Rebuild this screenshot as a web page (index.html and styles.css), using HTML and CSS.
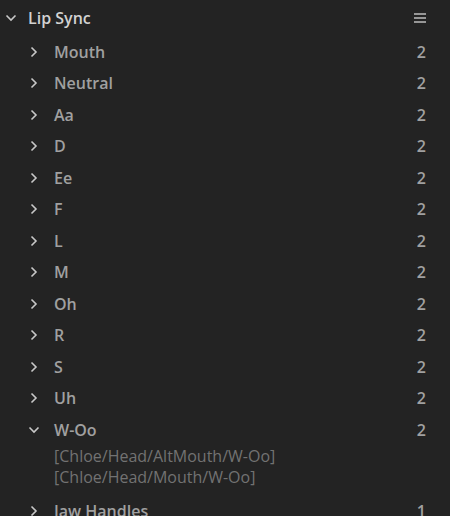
FILE: index.html
```html
<!DOCTYPE html>
<html>
<head>
<meta charset="utf-8">
<link rel="stylesheet" href="styles.css">
</head>
<body>
<div class="panel">
  <div class="header">
    <svg class="chev-down hdr-chev" viewBox="0 0 12 8" width="12" height="8"><path d="M1.5 1.5 L6 6 L10.5 1.5" fill="none" stroke="#c8c8c8" stroke-width="1.6"/></svg>
    <span class="title">Lip Sync</span>
    <svg class="menu" viewBox="0 0 12 10" width="12" height="10"><path d="M0 1 H12 M0 5 H12 M0 9 H12" stroke="#bdbdbd" stroke-width="1.4"/></svg>
  </div>
  <div class="list">
    <div class="row"><svg class="chev" viewBox="0 0 8 12" width="8" height="12"><path d="M1.5 1.5 L6 6 L1.5 10.5" fill="none" stroke="#c8c8c8" stroke-width="1.6"/></svg><span class="name">Mouth</span><span class="count">2</span></div>
    <div class="row"><svg class="chev" viewBox="0 0 8 12" width="8" height="12"><path d="M1.5 1.5 L6 6 L1.5 10.5" fill="none" stroke="#c8c8c8" stroke-width="1.6"/></svg><span class="name">Neutral</span><span class="count">2</span></div>
    <div class="row"><svg class="chev" viewBox="0 0 8 12" width="8" height="12"><path d="M1.5 1.5 L6 6 L1.5 10.5" fill="none" stroke="#c8c8c8" stroke-width="1.6"/></svg><span class="name">Aa</span><span class="count">2</span></div>
    <div class="row"><svg class="chev" viewBox="0 0 8 12" width="8" height="12"><path d="M1.5 1.5 L6 6 L1.5 10.5" fill="none" stroke="#c8c8c8" stroke-width="1.6"/></svg><span class="name">D</span><span class="count">2</span></div>
    <div class="row"><svg class="chev" viewBox="0 0 8 12" width="8" height="12"><path d="M1.5 1.5 L6 6 L1.5 10.5" fill="none" stroke="#c8c8c8" stroke-width="1.6"/></svg><span class="name">Ee</span><span class="count">2</span></div>
    <div class="row"><svg class="chev" viewBox="0 0 8 12" width="8" height="12"><path d="M1.5 1.5 L6 6 L1.5 10.5" fill="none" stroke="#c8c8c8" stroke-width="1.6"/></svg><span class="name">F</span><span class="count">2</span></div>
    <div class="row"><svg class="chev" viewBox="0 0 8 12" width="8" height="12"><path d="M1.5 1.5 L6 6 L1.5 10.5" fill="none" stroke="#c8c8c8" stroke-width="1.6"/></svg><span class="name">L</span><span class="count">2</span></div>
    <div class="row"><svg class="chev" viewBox="0 0 8 12" width="8" height="12"><path d="M1.5 1.5 L6 6 L1.5 10.5" fill="none" stroke="#c8c8c8" stroke-width="1.6"/></svg><span class="name">M</span><span class="count">2</span></div>
    <div class="row"><svg class="chev" viewBox="0 0 8 12" width="8" height="12"><path d="M1.5 1.5 L6 6 L1.5 10.5" fill="none" stroke="#c8c8c8" stroke-width="1.6"/></svg><span class="name">Oh</span><span class="count">2</span></div>
    <div class="row"><svg class="chev" viewBox="0 0 8 12" width="8" height="12"><path d="M1.5 1.5 L6 6 L1.5 10.5" fill="none" stroke="#c8c8c8" stroke-width="1.6"/></svg><span class="name">R</span><span class="count">2</span></div>
    <div class="row"><svg class="chev" viewBox="0 0 8 12" width="8" height="12"><path d="M1.5 1.5 L6 6 L1.5 10.5" fill="none" stroke="#c8c8c8" stroke-width="1.6"/></svg><span class="name">S</span><span class="count">2</span></div>
    <div class="row"><svg class="chev" viewBox="0 0 8 12" width="8" height="12"><path d="M1.5 1.5 L6 6 L1.5 10.5" fill="none" stroke="#c8c8c8" stroke-width="1.6"/></svg><span class="name">Uh</span><span class="count">2</span></div>
    <div class="group">
      <div class="row"><svg class="chev chev-open" viewBox="0 0 12 8" width="12" height="8"><path d="M1.5 1.5 L6 6 L10.5 1.5" fill="none" stroke="#c8c8c8" stroke-width="1.6"/></svg><span class="name">W-Oo</span><span class="count">2</span></div>
      <div class="paths">
        <div class="path">[Chloe/Head/AltMouth/W-Oo]</div>
        <div class="path">[Chloe/Head/Mouth/W-Oo]</div>
      </div>
    </div>
    <div class="row"><svg class="chev" viewBox="0 0 8 12" width="8" height="12"><path d="M1.5 1.5 L6 6 L1.5 10.5" fill="none" stroke="#c8c8c8" stroke-width="1.6"/></svg><span class="name">Jaw Handles</span><span class="count">1</span></div>
  </div>
</div>
</body>
</html>
```
FILE: styles.css
```css
html, body {
  margin: 0;
  padding: 0;
  background: #232323;
}
.panel {
  width: 450px;
  height: 516px;
  overflow: hidden;
  font-family: "Open Sans", "Noto Sans", sans-serif;
  background: #232323;
}
.header {
  height: 35px;
  display: flex;
  align-items: center;
  padding: 0 24px 0 5px;
}
.hdr-chev {
  margin-right: 11px;
}
.title {
  color: #d2d2d2;
  font-size: 16px;
  font-weight: 600;
  flex: 1;
}
.menu {
  display: block;
}
.list {
  padding-top: 1px;
}
.row {
  height: 31.5px;
  display: flex;
  align-items: center;
  padding: 0 24px 0 30px;
}
.chev {
  width: 8px;
  margin-right: 16px;
  flex: none;
}
.chev-open {
  width: 12px;
  margin-left: -2px;
  margin-right: 14px;
}
.name {
  flex: 1;
  color: #a0a0a0;
  font-size: 16px;
  font-weight: 600;
}
.count {
  color: #a0a0a0;
  font-size: 16px;
  font-weight: 600;
}
.paths {
  padding-left: 54px;
  margin-bottom: 7.5px;
}
.path {
  height: 21px;
  line-height: 21px;
  color: #727272;
  font-size: 16px;
}
```
